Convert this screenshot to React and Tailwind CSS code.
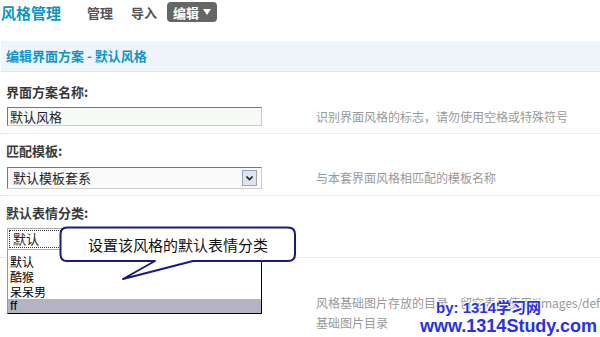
import React from "react";

const sep = "border-b border-dotted border-[#d3dbe5]";

export default function App() {
  return (
    <div className="relative w-[600px] h-[337px] overflow-hidden bg-white font-['Noto_Sans_CJK_SC','Liberation_Sans',sans-serif] text-[12px]">
      {/* header */}
      <div className="flex items-center h-[24px] pl-[1px]">
        <span className="text-[15px] leading-[15px] font-bold text-[#0b95c9]">风格管理</span>
        <span className="ml-[26px] text-[13px] leading-[13px] font-bold text-[#555]">管理</span>
        <span className="ml-[18px] text-[13px] leading-[13px] font-bold text-[#555]">导入</span>
        <span className="ml-[10px] h-[20px] flex items-center px-[6px] rounded-[4px] bg-[#666] text-white text-[13px] font-bold leading-[13px]">
          编辑
          <svg className="ml-[4px]" width="8" height="6" viewBox="0 0 8 6"><path d="M0 0H8L4 6Z" fill="#fff" /></svg>
        </span>
      </div>

      {/* section bar */}
      <div className={`mt-[17px] ml-[1px] h-[31px] bg-[#eff5fb] flex items-center pl-[5px] ${sep}`}>
        <span className="font-bold text-[13px] text-[#0b95c9] leading-[14px]">编辑界面方案 - 默认风格</span>
      </div>

      {/* block 1 */}
      <div className={`pt-[13px] pb-[7px] ${sep}`}>
        <div className="pl-[6px] text-[13px] leading-[14px] font-bold text-[#3a3a3a]">界面方案名称:</div>
        <div className="mt-[8px] flex items-center">
          <div className="ml-[7px] w-[255px] h-[19px] border border-t-[#777] border-l-[#777] border-b-[#ccc] border-r-[#ccc] bg-[#f7f9f7] flex items-center pl-[2px] text-[13px] text-[#222]">
            默认风格
          </div>
          <div className="ml-[54px] text-[#999] whitespace-nowrap">识别界面风格的标志，请勿使用空格或特殊符号</div>
        </div>
      </div>

      {/* block 2 */}
      <div className={`pt-[10px] pb-[6px] ${sep}`}>
        <div className="pl-[6px] text-[13px] leading-[14px] font-bold text-[#3a3a3a]">匹配模板:</div>
        <div className="mt-[9px] flex items-center">
          <div className="ml-[7px] w-[255px] h-[22px] border border-t-[#777] border-l-[#777] border-b-[#ccc] border-r-[#ccc] bg-[#f9faf9] flex items-center pl-[5px] pr-[4px] text-[13px] text-[#222]">
            <span className="flex-1">默认模板套系</span>
            <span className="w-[15px] h-[16px] border border-[#9aa3b5] bg-[#dfe4f0] flex items-center justify-center">
              <svg width="7" height="5" viewBox="0 0 7 5"><path d="M0.5 0.5L3.5 3.5L6.5 0.5" stroke="#222" strokeWidth="1.6" fill="none" /></svg>
            </span>
          </div>
          <div className="ml-[54px] text-[#999] whitespace-nowrap">与本套界面风格相匹配的模板名称</div>
        </div>
      </div>

      {/* block 3 */}
      <div className={`relative pt-[10px] pb-[7px] ${sep}`}>
        <div className="pl-[6px] text-[13px] leading-[14px] font-bold text-[#3a3a3a]">默认表情分类:</div>
        <div className="mt-[8px] flex items-center">
          <div className="ml-[7px] w-[255px] h-[22px] border border-[#aaa] bg-white flex items-center pl-[1px]">
            <div className="w-[80px] h-[18px] border border-dotted border-[#333] flex items-center pl-[3px] text-[13px] text-[#222]">默认</div>
          </div>
        </div>
      </div>

      {/* block 4 */}
      <div className="pt-[35px] pl-[316px] text-[#999] leading-[20px] whitespace-nowrap">
        <div>风格基础图片存放的目录，留空表示使用"images/default"作为</div>
        <div>基础图片目录</div>
      </div>

      {/* dropdown list */}
      <div className="absolute left-[7px] top-[250px] w-[255px] bg-white border-l border-l-[#999] border-r border-b border-r-black border-b-black pt-[4px] text-[12px] text-black leading-[15px]">
        <div className="h-[15px] pl-[2px]">默认</div>
        <div className="h-[15px] pl-[2px]">酷猴</div>
        <div className="h-[15px] pl-[2px]">呆呆男</div>
        <div className="h-[14px] pl-[2px] bg-[#b3b3c2] font-['Liberation_Sans',sans-serif] text-[13px] leading-[14px]">ff</div>
      </div>

      {/* callout */}
      <div className="absolute left-[59px] top-[226px] w-[238px] h-[56px]">
        <svg className="absolute inset-0" width="238" height="56" viewBox="0 0 238 56">
          <path
            d="M8 1.5 H229 Q236 1.5 236 8.5 V28 Q236 35 229 35 H134 L64 53 L96 35 H8 Q1.5 35 1.5 28 V8.5 Q1.5 1.5 8 1.5 Z"
            fill="#fff"
            stroke="#1a1a7c"
            strokeWidth="2"
            strokeLinejoin="round"
          />
        </svg>
        <div className="absolute left-0 top-[2px] w-[238px] h-[33px] flex items-center justify-center text-[15px] text-[#111] leading-[16px]">
          设置该风格的默认表情分类
        </div>
      </div>

      {/* watermark */}
      <div className="absolute left-[436px] top-[299px] text-[15px] leading-[17px] font-bold text-[#2630f2] font-['Liberation_Sans','Noto_Sans_CJK_SC',sans-serif] whitespace-nowrap [text-shadow:0_0_2px_#fff,1px_1px_1px_#fff,-1px_-1px_1px_#fff]">
        by: 1314学习网
      </div>
      <div className="absolute left-[420px] top-[316px] text-[18px] leading-[20px] font-bold text-[#2630f2] font-['Liberation_Sans',sans-serif] whitespace-nowrap [text-shadow:0_0_2px_#fff,1px_1px_1px_#fff,-1px_-1px_1px_#fff]">
        www.1314Study.com
      </div>
    </div>
  );
}
